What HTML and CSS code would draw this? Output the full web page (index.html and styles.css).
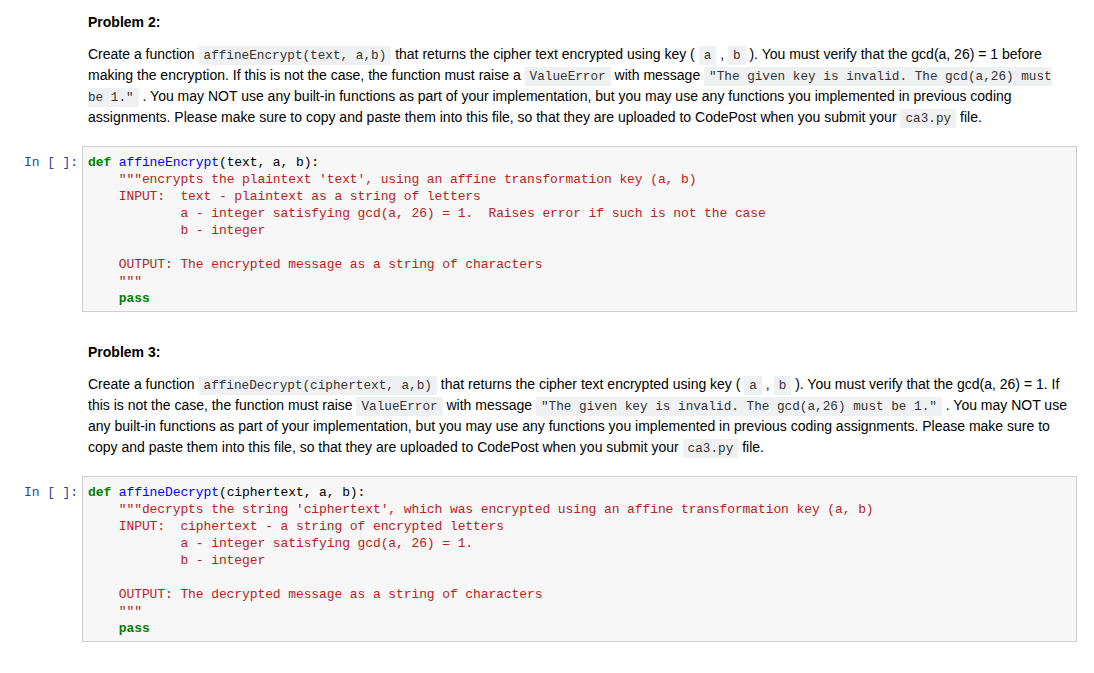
FILE: index.html
```html
<!DOCTYPE html>
<html>
<head>
<meta charset="utf-8">
<link rel="stylesheet" href="styles.css">
</head>
<body>
<div class="notebook">
  <div class="cell md-cell first">
    <div class="prompt"></div>
    <div class="md">
      <p class="heading">Problem 2:</p>
      <p class="para">Create a function <code>affineEncrypt(text, a,b)</code> that returns the cipher text encrypted using key ( <code>a</code> , <code>b</code> ). You must verify that the gcd(a, 26) = 1 before making the encryption. If this is not the case, the function must raise a <code>ValueError</code> with message <code>"The given key is invalid. The gcd(a,26) must be 1."</code> . You may NOT use any built-in functions as part of your implementation, but you may use any functions you implemented in previous coding assignments. Please make sure to copy and paste them into this file, so that they are uploaded to CodePost when you submit your <code>ca3.py</code> file.</p>
    </div>
  </div>
  <div class="cell code-cell">
    <div class="prompt in">In&nbsp;[&nbsp;]:</div>
    <pre class="input"><span class="kw">def</span> <span class="fn">affineEncrypt</span>(text, a, b):
    <span class="st">"""encrypts the plaintext 'text', using an affine transformation key (a, b)
    INPUT:  text - plaintext as a string of letters
            a - integer satisfying gcd(a, 26) = 1.  Raises error if such is not the case
            b - integer

    OUTPUT: The encrypted message as a string of characters
    """</span>
    <span class="kw">pass</span></pre>
  </div>
  <div class="cell md-cell">
    <div class="prompt"></div>
    <div class="md">
      <p class="heading">Problem 3:</p>
      <p class="para">Create a function <code>affineDecrypt(ciphertext, a,b)</code> that returns the cipher text encrypted using key ( <code>a</code> , <code>b</code> ). You must verify that the gcd(a, 26) = 1. If this is not the case, the function must raise <code>ValueError</code> with message <code>"The given key is invalid. The gcd(a,26) must be 1."</code> . You may NOT use any built-in functions as part of your implementation, but you may use any functions you implemented in previous coding assignments. Please make sure to copy and paste them into this file, so that they are uploaded to CodePost when you submit your <code>ca3.py</code> file.</p>
    </div>
  </div>
  <div class="cell code-cell">
    <div class="prompt in">In&nbsp;[&nbsp;]:</div>
    <pre class="input"><span class="kw">def</span> <span class="fn">affineDecrypt</span>(ciphertext, a, b):
    <span class="st">"""decrypts the string 'ciphertext', which was encrypted using an affine transformation key (a, b)
    INPUT:  ciphertext - a string of encrypted letters
            a - integer satisfying gcd(a, 26) = 1.
            b - integer

    OUTPUT: The decrypted message as a string of characters
    """</span>
    <span class="kw">pass</span></pre>
  </div>
</div>
</body>
</html>
```
FILE: styles.css
```css
html, body {
  margin: 0;
  padding: 0;
  background: #ffffff;
}

body {
  font-family: "Liberation Sans", Arial, sans-serif;
  font-size: 14px;
  color: #000000;
}

.notebook {
  width: 1077px;
  padding-top: 12px;
}

.cell {
  display: flex;
  align-items: flex-start;
}

.prompt {
  flex: 0 0 82px;
  box-sizing: border-box;
  padding-right: 4px;
  text-align: right;
  font-family: "Liberation Mono", "DejaVu Sans Mono", monospace;
  font-size: 13px;
  letter-spacing: -0.1px;
  line-height: 17px;
  color: #303f9f;
}

.prompt.in {
  padding-top: 8px;
}

.md {
  flex: 1;
  padding: 0 5px 0 6px;
}

.md p {
  margin: 0;
  line-height: 21px;
}

.heading {
  font-weight: bold;
}

.para {
  margin-top: 11px !important;
}

.md code {
  font-family: "Liberation Mono", "DejaVu Sans Mono", monospace;
  font-size: 12.7px;
  line-height: 1;
  background: #eff0f1;
  padding: 2px 5px;
  color: #333333;
}

.code-cell {
  margin-top: 18px;
  margin-bottom: 30px;
}

.input {
  flex: 1;
  margin: 0;
  padding: 7px 5px 4px 5px;
  background: #f7f7f7;
  border: 1px solid #cfcfcf;
  font-family: "Liberation Mono", "DejaVu Sans Mono", monospace;
  font-size: 13px;
  letter-spacing: -0.1px;
  line-height: 17px;
  color: #000000;
  white-space: pre;
}

.kw {
  color: #008000;
  font-weight: bold;
}

.fn {
  color: #0000ff;
}

.st {
  color: #ba2121;
}
```
